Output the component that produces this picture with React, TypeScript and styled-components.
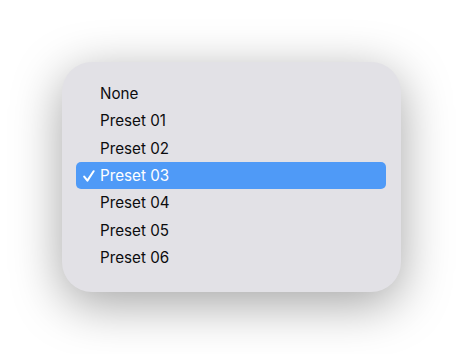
import React, { useState } from 'react';
import styled, { createGlobalStyle } from 'styled-components';

const GlobalStyle = createGlobalStyle`
  html, body {
    margin: 0;
    padding: 0;
    background: #ffffff;
  }
  body {
    font-family: Inter, "Noto Sans", sans-serif;
  }
`;

const Page = styled.div`
  width: 464px;
  height: 354px;
  padding: 62px 0 0 62px;
  box-sizing: border-box;
`;

const Menu = styled.ul`
  list-style: none;
  margin: 0;
  width: 339px;
  height: 230px;
  box-sizing: border-box;
  padding: 18px 15px 0 14px;
  background: #e2e1e6;
  border-radius: 30px;
  box-shadow: 0 12px 50px rgba(0, 0, 0, 0.36);
  display: flex;
  flex-direction: column;
`;

const Item = styled.li<{ $active?: boolean }>`
  position: relative;
  height: 27.3px;
  display: flex;
  align-items: center;
  padding-left: 24px;
  border-radius: 5px;
  font-size: 15.2px;
  font-weight: 400;
  color: ${(p) => (p.$active ? '#ffffff' : '#0c0c0e')};
  background: ${(p) => (p.$active ? '#4f9af7' : 'transparent')};
  cursor: default;
`;

const Check = styled.svg`
  position: absolute;
  left: 7px;
  top: 8px;
  width: 12px;
  height: 12px;
`;

const items = ['None', 'Preset 01', 'Preset 02', 'Preset 03', 'Preset 04', 'Preset 05', 'Preset 06'];

export default function App() {
  const [selected, setSelected] = useState(3);
  return (
    <>
      <GlobalStyle />
      <Page>
        <Menu>
          {items.map((label, i) => (
            <Item key={label} $active={i === selected} onClick={() => setSelected(i)}>
              {i === selected && (
                <Check viewBox="0 0 12 12" fill="none">
                  <path d="M1.2 6.6 L4.4 10.6 L10.6 1.2" stroke="#ffffff" strokeWidth="2" strokeLinecap="round" strokeLinejoin="round" />
                </Check>
              )}
              {label}
            </Item>
          ))}
        </Menu>
      </Page>
    </>
  );
}
